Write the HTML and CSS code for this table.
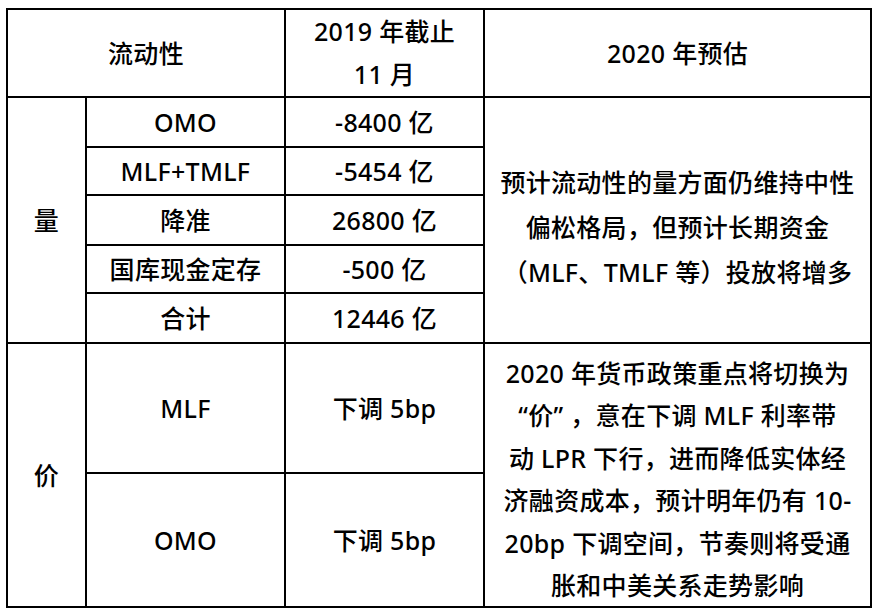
FILE: index.html
```html
<!DOCTYPE html>
<html lang="zh-CN">
<head>
<meta charset="utf-8">
<link rel="stylesheet" href="styles.css">
</head>
<body>
<table class="liq">
  <colgroup>
    <col class="c1"><col class="c2"><col class="c3"><col class="c4">
  </colgroup>
  <tr class="h">
    <td colspan="2">流动性</td>
    <td class="two">2019 年截止<br>11 月</td>
    <td>2020 年预估</td>
  </tr>
  <tr class="r50">
    <td rowspan="5">量</td>
    <td>OMO</td>
    <td>-8400 亿</td>
    <td rowspan="5" class="note q">预计流动性的量方面仍维持中性<br>偏松格局，但预计长期资金<br>（MLF、TMLF 等）投放将增多</td>
  </tr>
  <tr class="r48"><td>MLF+TMLF</td><td>-5454 亿</td></tr>
  <tr class="r50"><td>降准</td><td>26800 亿</td></tr>
  <tr class="r48"><td>国库现金定存</td><td>-500 亿</td></tr>
  <tr class="r50"><td>合计</td><td>12446 亿</td></tr>
  <tr class="p1">
    <td rowspan="2">价</td>
    <td>MLF</td>
    <td>下调 5bp</td>
    <td rowspan="2" class="note p">2020 年货币政策重点将切换为<br>“价” ，意在下调 MLF 利率带<br>动 LPR 下行，进而降低实体经<br>济融资成本，预计明年仍有 10-<br>20bp 下调空间，节奏则将受通<br>胀和中美关系走势影响</td>
  </tr>
  <tr class="p2"><td>OMO</td><td>下调 5bp</td></tr>
</table>
</body>
</html>
```

FILE: styles.css
```css
html, body {
  margin: 0;
  padding: 0;
  background: #fff;
}
body {
  padding: 8px 0 0 6px;
  font-family: "Noto Sans", "Noto Sans CJK SC", sans-serif;
  font-size: 25px;
  font-weight: 500;
  letter-spacing: 0.3px;
  color: #000;
}
.liq {
  border-collapse: collapse;
  table-layout: fixed;
  width: 864px;
}
.c1 { width: 79px; }
.c2 { width: 199px; }
.c3 { width: 199px; }
.c4 { width: 387px; }
.liq td {
  border: 2px solid #000;
  text-align: center;
  vertical-align: middle;
  padding: 0;
  line-height: 1.2;
  white-space: nowrap;
}
.h { height: 88px; }
.h .two { line-height: 43px; }
.r50 { height: 50px; }
.r48 { height: 48px; }
.p1 { height: 128px; }
.p2 { height: 132px; }
.note.q { line-height: 45px; padding-top: 14px; }
.note.p { line-height: 42.4px; padding-top: 8px; }
```
